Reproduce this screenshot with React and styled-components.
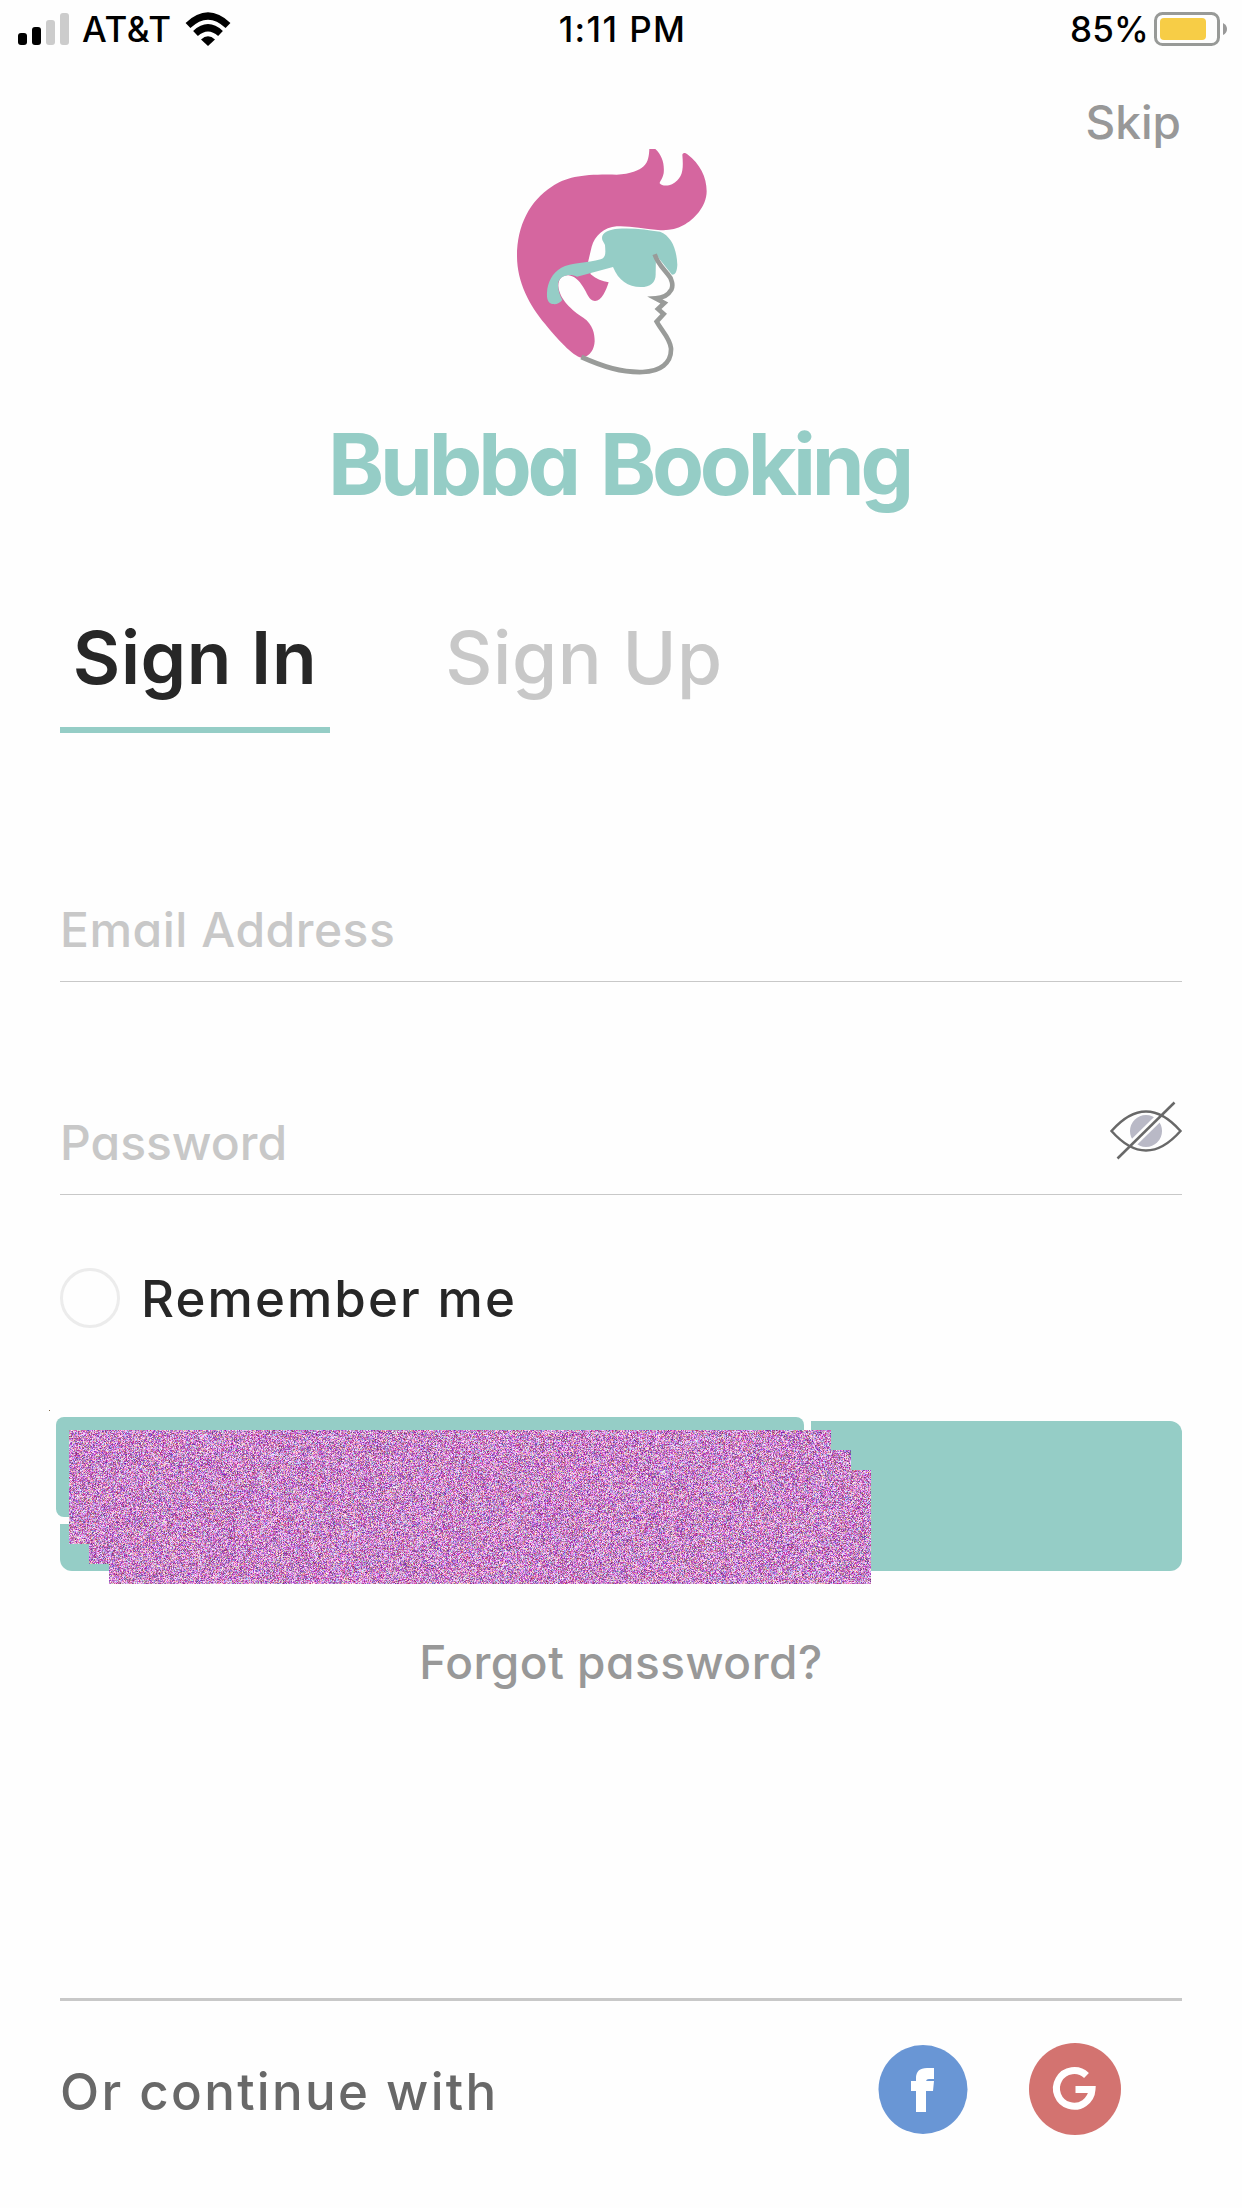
import React, { useEffect, useRef } from "react";
import styled, { createGlobalStyle } from "styled-components";

const teal = "#95cdc6";

const GlobalStyle = createGlobalStyle`
  * { box-sizing: border-box; }
  body { margin: 0; background: #fefefe; }
  button, input { font: inherit; letter-spacing: inherit; border: 0; background: none; padding: 0; margin: 0; outline: 0; }
`;

const Screen = styled.div`
  width: 1242px;
  height: 2208px;
  display: flex;
  flex-direction: column;
  background: #fefefe;
  overflow: hidden;
  font-family: Inter, "Liberation Sans", sans-serif;
  font-feature-settings: "cv11" 1;
  font-weight: 450;
`;

const StatusBar = styled.header`
  height: 60px;
  padding: 0 15px 0 18px;
  display: grid;
  grid-template-columns: 1fr auto 1fr;
  color: #000;
  font-size: 35px;
  line-height: 59px;
`;

const StatusGroup = styled.div`
  display: flex;
  justify-content: ${(p) => (p.$end ? "flex-end" : "flex-start")};
`;

const Label = styled.span`
  display: block;
  white-space: nowrap;
  letter-spacing: ${(p) => p.$track || 0}px;
  margin: 0 ${(p) => p.$right || 0}px 0 ${(p) => p.$left || 0}px;
`;

const TopBar = styled.nav`
  height: 80px;
  padding: 30px 61px 0 0;
  display: flex;
  justify-content: flex-end;
`;

const SkipButton = styled.button`
  height: 64px;
  font-size: 46px;
  line-height: 64px;
  letter-spacing: 0;
  color: #989898;
`;

const Brand = styled.div`
  height: 410px;
  display: flex;
  flex-direction: column;
  align-items: center;
`;

const LogoMark = styled.svg`
  display: block;
  flex: none;
  width: 230px;
  height: 260px;
  margin: -10px 12px 0 0;
`;

const BrandName = styled.h1`
  margin: 21px 4px 0 0;
  height: 108px;
  font-size: 85px;
  line-height: 108px;
  font-weight: 700;
  letter-spacing: -4.2px;
  word-spacing: 7px;
  white-space: nowrap;
  color: ${teal};
`;

const Tabs = styled.div`
  height: 183px;
  padding: 50px 60px 0;
  display: flex;
  gap: 104px;
`;

const Tab = styled.button`
  width: ${(p) => (p.$active ? 270 : 300)}px;
  height: 133px;
  font-size: 73px;
  line-height: 114px;
  padding-bottom: 12px;
  font-weight: ${(p) => (p.$active ? 600 : 450)};
  letter-spacing: ${(p) => p.$track}px;
  white-space: nowrap;
  color: ${(p) => (p.$active ? "#272727" : "#c8c8c8")};
  border-bottom: 6px solid ${(p) => (p.$active ? teal : "transparent")};
`;

const Form = styled.form`
  padding: 0 60px;
  display: flex;
  flex-direction: column;
`;

const Field = styled.label`
  display: flex;
  align-items: flex-end;
  height: ${(p) => p.$height}px;
  border-bottom: 1px solid #c8c8c8;
`;

const Input = styled.input`
  flex: 1;
  min-width: 0;
  height: 102px;
  padding-bottom: 2px;
  font-size: 48px;
  letter-spacing: ${(p) => p.$track}px;
  &::placeholder { color: #c8c8c8; opacity: 1; }
`;

const EyeIcon = styled.svg`
  display: block;
  width: 76px;
  height: 62px;
  margin: 0 -3px 32px 0;
`;

const Remember = styled.label`
  display: flex;
  align-items: center;
  height: 60px;
  margin-top: 73px;
  gap: 21px;
  color: #272727;
  font-size: 51px;
  line-height: 60px;
  & > span:last-child { padding-top: 2px; }
`;

const Circle = styled.span`
  width: 60px;
  height: 60px;
  border: 3px solid #ececec;
  border-radius: 50%;
`;

const Submit = styled.div`
  position: relative;
  height: 150px;
  margin-top: 93px;
  border-radius: 12px;
  background: ${teal};
`;

const Patch = styled.div`
  position: absolute;
  left: -11px;
  top: -11px;
  width: 762px;
  height: 114px;
  padding: 7px;
  background: #fefefe;
  &::before {
    content: "";
    display: block;
    height: 100%;
    border-radius: 8px;
    background: ${teal};
  }
`;

const Speck = styled.i`
  position: absolute;
  left: -11px;
  top: -11px;
  width: 1px;
  height: 1px;
  background: #806b4c;
`;

const Grain = styled.canvas`
  position: absolute;
  left: 9px;
  top: 9px;
  width: 802px;
  height: 154px;
  clip-path: polygon(0 0, 762px 0, 762px 20px, 782px 20px, 782px 40px, 802px 40px, 802px 154px, 40px 154px, 40px 134px, 20px 134px, 20px 114px, 0 114px);
`;

const Forgot = styled.button`
  align-self: center;
  margin-top: 59px;
  height: 64px;
  font-size: 46px;
  line-height: 64px;
  color: #989898;
  letter-spacing: 0.5px;
`;

const Footer = styled.footer`
  margin: auto 60px 0;
  height: 210px;
  display: flex;
  align-items: flex-start;
  border-top: 3px solid #c8c8c8;
`;

const FooterText = styled.span`
  flex: 1;
  margin-top: 58px;
  font-size: 51px;
  line-height: 66px;
  letter-spacing: 2.3px;
  color: #686868;
`;

const Social = styled.svg`
  display: block;
  width: 92px;
  height: 92px;
  margin: 42px ${(p) => p.$right}px 0 0;
`;

function NoiseCover() {
  const ref = useRef(null);
  useEffect(() => {
    const ctx = ref.current.getContext("2d");
    const image = ctx.createImageData(802, 154);
    let seed = 90210;
    const next = () => {
      seed = (seed + 0x6d2b79f5) | 0;
      let t = Math.imul(seed ^ (seed >>> 15), 1 | seed);
      t = (t + Math.imul(t ^ (t >>> 7), 61 | t)) ^ t;
      return ((t ^ (t >>> 14)) >>> 0) / 4294967296;
    };
    for (let i = 0; i < image.data.length; i += 4) {
      const light = next();
      image.data[i] = 75 + 120 * Math.sqrt(next()) + 90 * light;
      image.data[i + 1] = 25 + 70 * next() + 155 * light;
      image.data[i + 2] = 75 + 120 * Math.sqrt(next()) + 90 * light;
      image.data[i + 3] = 255;
    }
    ctx.putImageData(image, 0, 0);
  }, []);
  return <Grain ref={ref} width={802} height={154} />;
}

export default function App() {
  return (
    <Screen>
      <GlobalStyle />
      <StatusBar>
        <StatusGroup>
          <svg width="52" height="60">
            <rect x="0" y="33" width="9" height="12" rx="3" />
            <rect x="14" y="27" width="9" height="18" rx="3" />
            <rect x="28" y="20" width="9" height="25" rx="3" fill="#ccc" />
            <rect x="42" y="13" width="9" height="32" rx="3" fill="#ccc" />
          </svg>
          <Label $left={12} $right={13} $track={0.6}>AT&amp;T</Label>
          <svg width="46" height="60" viewBox="184 0 46 60">
            <g fill="none" stroke="#000" strokeWidth="7">
              <path d="M187 25.5Q207 6.500 227 25.500" />
              <path d="M194.500 33.500Q207 22 219.500 33.500" />
            </g>
            <path d="M200 39.500Q207 33 214 39.500L207 46Z" />
          </svg>
        </StatusGroup>
        <Label $track={1.4}>1:11 PM</Label>
        <StatusGroup $end>
          <Label $right={4} $track={0.2}>85%</Label>
          <svg width="74" height="60" viewBox="1153 0 74 60">
            <rect x="1155.500" y="13.500" width="63" height="31" rx="7" fill="none" stroke="#989a98" strokeWidth="3" />
            <rect x="1160" y="18" width="46" height="22" rx="4" fill="#f7cd46" />
            <path d="M1223 23Q1227 25 1227 29Q1227 33 1223 35Z" fill="#999" />
          </svg>
        </StatusGroup>
      </StatusBar>

      <TopBar><SkipButton>Skip</SkipButton></TopBar>

      <Brand>
        <LogoMark viewBox="0 0 690 780">
          <path fill="#d5669f" d="M448 57H466C486 76 494 100 491 130C488 146 480 153 479 160C485 169 505 168 516 163C548 145 551 122 547 74C550 68 555 68 562 73C600 102 620 141 620 184C620 229 582 270 550 286C527 299 504 302 474 300C430 296 390 287 350 289C312 292 284 318 275 350L264 397L272 433C290 447 306 455 326 457C318 482 305 513 285 513C266 511 262 489 249 470C237 452 224 438 205 436C187 435 175 447 175 468C178 507 215 541 250 563C279 583 284 611 284 634C283 656 272 680 244 683C220 680 170 625 136 583C89 526 51 458 51 378C51 286 90 212 155 170C202 139 252 132 350 134C391 133 418 121 431 109C445 95 447 78 448 57Z" />
          <path fill={teal} d="M306 324C306 306 328 298 355 296C401 293 445 300 480 305C514 318 530 356 532 404C531 425 526 434 516 434L468 374L467 430C468 457 453 471 422 471C384 471 356 452 339 411L231 440C215 431 184 432 175 456C172 475 178 493 187 510C180 520 168 524 158 522C144 520 140 508 141 488C143 456 156 430 184 413C211 399 263 399 302 388C320 382 316 364 315 345C312 337 306 333 306 324Z" />
          <path fill="none" stroke="#999b99" strokeWidth="14" strokeLinejoin="miter" d="M464 373C473 400 488 414 502 431C517 447 520 467 514 479C504 497 488 504 467 505L493 519L474 537L491 552L470 575C486 604 510 624 513 655C515 700 480 725 428 726C365 728 309 710 244 681" />
        </LogoMark>
        <BrandName>Bubba Booking</BrandName>
      </Brand>

      <Tabs>
        <Tab $active $track={0.6}>Sign In</Tab>
        <Tab $track={0.6}>Sign Up</Tab>
      </Tabs>

      <Form onSubmit={(e) => e.preventDefault()}>
        <Field $height={249}><Input $track={0.5} placeholder="Email Address" /></Field>
        <Field $height={213}>
          <Input $track={0} placeholder="Password" />
          <EyeIcon viewBox="1109 1100 76 62">
            <circle cx="1146" cy="1131" r="16" fill="#b9b9c6" />
            <path d="M1117.500 1158.500L1174.500 1102.500" stroke="#fefefe" strokeWidth="8" />
            <g fill="none" stroke="#686868" strokeWidth="2.500">
              <path d="M1111.500 1131Q1146 1092 1180.500 1131Q1146 1170 1111.500 1131Z" />
              <path d="M1117.500 1158.500L1174.500 1102.500" />
            </g>
          </EyeIcon>
        </Field>
        <Remember><Circle /><Label $track={2.1}>Remember me</Label></Remember>
        <Submit>
          <Patch />
          <Speck />
          <NoiseCover />
        </Submit>
        <Forgot type="button">Forgot password?</Forgot>
      </Form>

      <Footer>
        <FooterText>Or continue with</FooterText>
        <Social $right={59} viewBox="877 2043 92 92">
          <circle cx="922" cy="2089.500" r="44.500" fill="#6996d5" />
          <path fill="#fff" d="M933 2068V2079H928Q925 2079 925 2082V2081H933L932 2091H925V2112H915V2091H910V2081H915V2078Q915 2068 926 2068Z" />
        </Social>
        <Social $right={61} viewBox="1028 2043 92 92">
          <circle cx="1074" cy="2089" r="46" fill="#d37370" />
          <path fill="none" stroke="#fff" strokeWidth="7" d="M1085.500 2075.500A17.800 17.800 0 1 0 1091 2089.500H1074.500" />
        </Social>
      </Footer>
    </Screen>
  );
}
